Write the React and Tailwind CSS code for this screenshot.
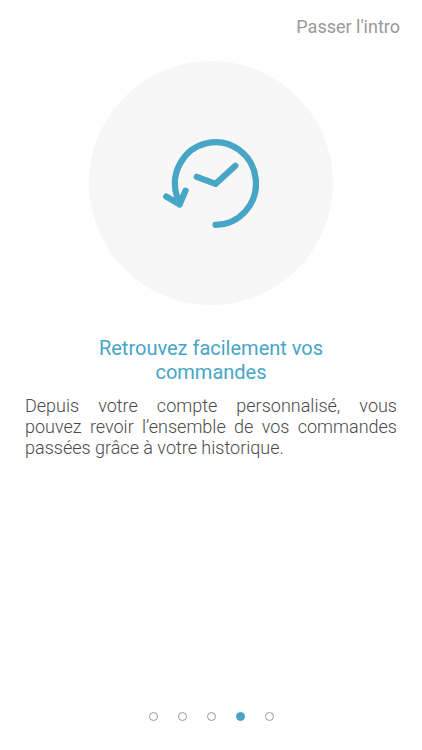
import React, { useState } from 'react';
import clsx from 'clsx';

const STEPS = [1, 2, 3, 4, 5];

function HistoryIcon() {
    return (
        <svg width="96" height="90" viewBox="0 0 96 90" fill="none" stroke="currentColor" strokeWidth="6.2" strokeLinecap="round" strokeLinejoin="round" aria-hidden="true">
            <path d="M52.5 86.8A40.5 41.3 0 1 0 14.2 59L16.5 66.3" />
            <path d="M3.2 58.5L16.6 66.4L22.6 52.6" />
            <path d="M33.8 38.8L52.5 45.9L72.4 27.8" />
        </svg>
    );
}

export default function App() {
    const [current, setCurrent] = useState(4);

    return (
        <div className="min-h-screen flex flex-col bg-white font-['Roboto',sans-serif]">
            <header className="flex justify-end px-[22px] pt-[15px]">
                <button type="button" className="text-lg leading-6 text-[#999999] cursor-pointer">Passer l'intro</button>
            </header>
            <main className="flex-1 flex flex-col items-center px-[25px] pt-[22px]">
                <div className="w-[244px] h-[244px] rounded-full bg-[#f7f7f7] text-[#47a5c6] flex items-center justify-center">
                    <HistoryIcon />
                </div>
                <h1 className="mt-[31px] max-w-[260px] text-center text-xl leading-6 text-[#47a5c6]">
                    Retrouvez facilement vos commandes
                </h1>
                <p className="mt-[11px] w-full text-justify text-lg leading-[21px] font-light text-[#4a4a4a]">
                    Depuis votre compte personnalisé, vous pouvez revoir l’ensemble de vos commandes passées grâce à votre historique.
                </p>
            </main>
            <nav className="flex justify-center gap-5 pb-[29px]" aria-label="Étapes">
                {STEPS.map((step) => (
                    <button
                        key={step}
                        type="button"
                        aria-label={`Étape ${step}`}
                        aria-current={step === current ? 'step' : undefined}
                        onClick={() => setCurrent(step)}
                        className={clsx(
                            'w-[9px] h-[9px] rounded-full border cursor-pointer',
                            step === current ? 'bg-[#47a5c6] border-[#47a5c6]' : 'border-[#999999]'
                        )}
                    />
                ))}
            </nav>
        </div>
    );
}
